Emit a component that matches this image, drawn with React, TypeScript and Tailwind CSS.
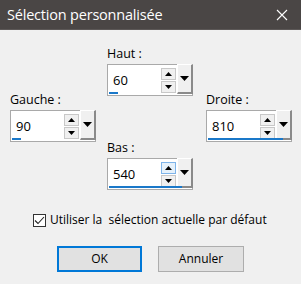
import React from "react";

type FieldProps = {
  label: string;
  value: string;
  bar: number;
  hot?: boolean;
};

function Tri({ dir, size = "sm" }: { dir: "up" | "down"; size?: "sm" | "lg" }) {
  const w = size === "sm" ? 7 : 9;
  const h = size === "sm" ? 4 : 5;
  return (
    <svg width={w} height={h} viewBox={`0 0 ${w} ${h}`} className="block">
      {dir === "up" ? (
        <polygon points={`0,${h} ${w},${h} ${w / 2},0`} fill="#000" />
      ) : (
        <polygon points={`0,0 ${w},0 ${w / 2},${h}`} fill="#000" />
      )}
    </svg>
  );
}

function SpinField({ label, value, bar, hot }: FieldProps) {
  return (
    <div className="flex flex-col w-[86px]">
      <div className="h-[18px] text-[12.5px] leading-[16px] text-black">{label}</div>
      <div className="relative h-[32px] w-[86px] border border-[#a9a9a9] bg-white">
        <div className="absolute left-[5px] top-[8px] text-[13px] leading-[15px] text-black">{value}</div>
        <div
          className={`absolute left-[53px] top-[3px] flex h-[12px] w-[15px] items-center justify-center border ${
            hot ? "border-[#7eb4ea] bg-[#e5f1fb]" : "border-[#c8c8c8] bg-[#f0f0f0]"
          }`}
        >
          <Tri dir="up" />
        </div>
        <div className="absolute left-[53px] top-[16px] flex h-[12px] w-[15px] items-center justify-center border border-[#c8c8c8] bg-[#f0f0f0]">
          <Tri dir="down" />
        </div>
        <div className="absolute left-[69px] top-[-1px] flex h-[30px] w-[16px] items-start justify-center border-l border-t border-r-2 border-b-2 border-l-white border-t-white border-r-[#8a8a8a] border-b-[#8a8a8a] bg-[#f0f0f0] pt-[11px]">
          <Tri dir="down" size="lg" />
        </div>
        <div className="absolute left-[1px] bottom-[1px] h-[2px] bg-[#1a78c9]" style={{ width: bar }} />
      </div>
    </div>
  );
}

export default function App() {
  return (
    <div
      className="w-[301px] h-[284px] bg-[#f0f0f0] overflow-hidden"
      style={{ fontFamily: '"Open Sans", "Noto Sans", sans-serif' }}
    >
      <div className="flex h-[30px] items-center justify-between bg-[#4a4645] pl-[7px] pr-[13px] border-b border-[#5c5857]">
        <span className="text-[14.5px] text-white tracking-[-0.2px]">Sélection personnalisée</span>
        <svg width="12" height="12" viewBox="0 0 12 12">
          <path d="M1 1 L11 11 M11 1 L1 11" stroke="#fff" strokeWidth="1.1" />
        </svg>
      </div>

      <div className="grid grid-cols-[97px_99px_86px] grid-rows-[46px_48px_50px] pl-[10px] pt-[16px]">
        <div className="col-start-2 row-start-1">
          <SpinField label="Haut :" value="60" bar={9} />
        </div>
        <div className="col-start-1 row-start-2">
          <SpinField label="Gauche :" value="90" bar={9} />
        </div>
        <div className="col-start-3 row-start-2">
          <SpinField label="Droite :" value="810" bar={75} />
        </div>
        <div className="col-start-2 row-start-3">
          <SpinField label="Bas :" value="540" bar={73} hot />
        </div>
      </div>

      <div className="mt-[22px] flex items-center pl-[33px]">
        <div className="flex h-[13px] w-[13px] items-center justify-center border border-[#333] bg-white">
          <svg width="11" height="9" viewBox="0 0 11 9">
            <path d="M1 4.5 L4 7.5 L10 1" stroke="#222" strokeWidth="1.1" fill="none" />
          </svg>
        </div>
        <span className="ml-[4px] text-[12px] leading-[16px] text-black whitespace-pre">
          Utiliser la  sélection actuelle par défaut
        </span>
      </div>

      <div className="mt-[18px] flex gap-[16px] pl-[57px]">
        <button className="h-[26px] w-[85px] border-2 border-[#0078d7] bg-[#e1e1e1] text-[12px] text-black">
          OK
        </button>
        <button className="h-[26px] w-[86px] border border-[#adadad] bg-[#e1e1e1] text-[12px] text-black">
          Annuler
        </button>
      </div>
    </div>
  );
}
